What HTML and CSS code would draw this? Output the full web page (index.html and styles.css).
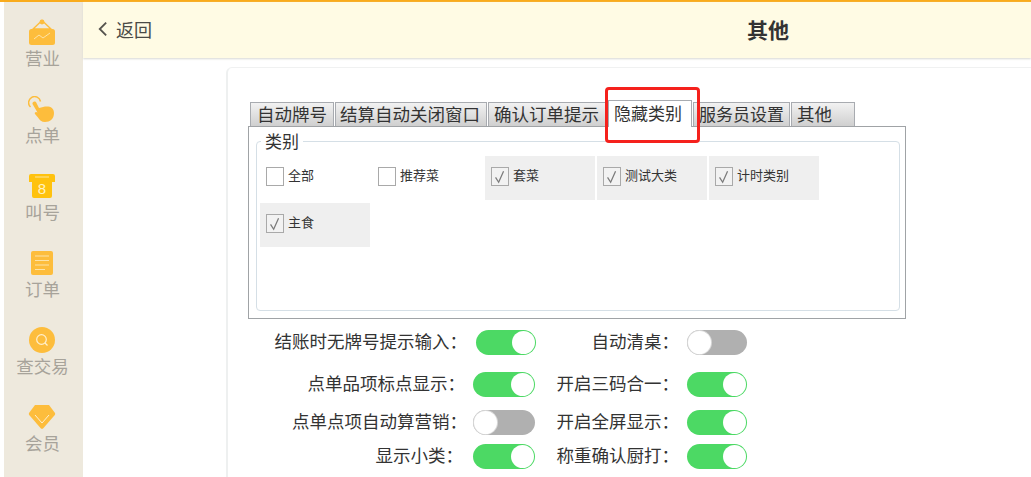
FILE: index.html
```html
<!DOCTYPE html>
<html lang="zh">
<head>
<meta charset="utf-8">
<title>其他</title>
<link rel="stylesheet" href="styles.css">
</head>
<body>
<div class="page">
  <nav class="side">
    <a class="nav-item">
      <svg class="nav-icon" viewBox="0 0 28 26"><path d="M14 1.500 5 10h18Z" fill="none" stroke="#fdbd3c" stroke-width="1.400"/><circle cx="14" cy="3" r="2.400" fill="#fdbd3c"/><rect x="1" y="10" width="26" height="16" rx="2.500" fill="#fdbd3c"/><path d="M6 20l5-4 4 3 7-5" fill="none" stroke="#fde3a8" stroke-width="1"/></svg>
      <span>营业</span>
    </a>
    <a class="nav-item">
      <svg class="nav-icon" viewBox="0 0 28 26"><path d="M2.500 11A6 6 0 1 1 12.500 5.500" fill="none" stroke="#fdbd3c" stroke-width="1.500"/><path d="M4.500 8c-.5-2.500 3-3.500 4-1l2.500 5 6-1.500c5-.5 9 1 9 6.500 0 6-4 9-9 9-3.500 0-5.500-2-7-4.500L7 18c-1-1.500 1-3 2.500-1.500Z" fill="#fdbd3c"/></svg>
      <span>点单</span>
    </a>
    <a class="nav-item">
      <svg class="nav-icon" viewBox="0 0 28 26"><path d="M3 1h22a2 2 0 0 1 2 2v6h-3v14a2 2 0 0 1-2 2H6a2 2 0 0 1-2-2V9H1V3a2 2 0 0 1 2-2Z" fill="#ffc20e"/><path d="M7 4h14" stroke="#fde59a" stroke-width="1"/><text x="14" y="21" class="icon-digit">8</text></svg>
      <span>叫号</span>
    </a>
    <a class="nav-item">
      <svg class="nav-icon" viewBox="0 0 28 26"><rect x="3" y="1" width="22" height="24" rx="2" fill="#fdbd3c"/><path d="M7 6h14M7 10.500h14M7 15h14M7 19.500h10" stroke="#fde3a8" stroke-width="1.200"/></svg>
      <span>订单</span>
    </a>
    <a class="nav-item">
      <svg class="nav-icon" viewBox="0 0 28 26"><circle cx="14" cy="13" r="13" fill="#fdbd3c"/><circle cx="13.500" cy="12.500" r="4.800" fill="none" stroke="#fff0cf" stroke-width="1.200"/><path d="m17 16 2.500 2.500" stroke="#fff0cf" stroke-width="1.200"/></svg>
      <span>查交易</span>
    </a>
    <a class="nav-item">
      <svg class="nav-icon" viewBox="0 0 28 26"><path d="M7 1h14l6 8a2 2 0 0 1-.2 2L15.500 24a2 2 0 0 1-3 0L1.200 11a2 2 0 0 1-.2-2Z" fill="#fdbd3c"/><path d="m7 11 7 8 7-8" fill="none" stroke="#fff0cf" stroke-width="1"/></svg>
      <span>会员</span>
    </a>
  </nav>

  <div class="main">
    <header class="topbar">
      <a class="back">
        <svg class="back-icon" viewBox="0 0 12 18"><path d="M10 2 3 9l7 7" fill="none" stroke="#55534e" stroke-width="2"/></svg>
        <span>返回</span>
      </a>
      <h1 class="title">其他</h1>
    </header>

    <section class="card">
      <div class="tabs">
        <div class="tab tab-auto">自动牌号</div>
        <div class="tab tab-close">结算自动关闭窗口</div>
        <div class="tab tab-confirm">确认订单提示</div>
        <div class="tab tab-hide">隐藏类别</div>
        <div class="tab tab-staff">服务员设置</div>
        <div class="tab tab-other">其他</div>
        <div class="highlight"></div>
      </div>
      <div class="tab-panel">
        <fieldset class="group">
          <legend>类别</legend>
          <div class="cat-grid">
            <label class="cat"><span class="box"></span><span class="cat-text">全部</span></label>
            <label class="cat"><span class="box"></span><span class="cat-text">推荐菜</span></label>
            <label class="cat is-on"><span class="box"><svg class="tick" viewBox="0 0 18 19"><path d="M4 10.500 7.500 16 13 3.500"/></svg></span><span class="cat-text">套菜</span></label>
            <label class="cat is-on"><span class="box"><svg class="tick" viewBox="0 0 18 19"><path d="M4 10.500 7.500 16 13 3.500"/></svg></span><span class="cat-text">测试大类</span></label>
            <label class="cat is-on"><span class="box"><svg class="tick" viewBox="0 0 18 19"><path d="M4 10.500 7.500 16 13 3.500"/></svg></span><span class="cat-text">计时类别</span></label>
            <label class="cat is-on"><span class="box"><svg class="tick" viewBox="0 0 18 19"><path d="M4 10.500 7.500 16 13 3.500"/></svg></span><span class="cat-text">主食</span></label>
          </div>
        </fieldset>
      </div>

      <div class="settings">
        <div class="lbl">结账时无牌号提示输入：</div><div class="tog on shift"></div>
        <div class="lbl lbl-r">自动清桌：</div><div class="tog off narrow"></div>
        <div class="lbl lbl-mid">点单品项标点显示：</div><div class="tog on"></div>
        <div class="lbl lbl-r">开启三码合一：</div><div class="tog on narrow"></div>
        <div class="lbl">点单点项自动算营销：</div><div class="tog off"></div>
        <div class="lbl lbl-r">开启全屏显示：</div><div class="tog on narrow"></div>
        <div class="lbl lbl-far">显示小类：</div><div class="tog on"></div>
        <div class="lbl lbl-r">称重确认厨打：</div><div class="tog on narrow"></div>
      </div>
    </section>
  </div>
</div>
</body>
</html>
```

FILE: styles.css
```css
* { box-sizing: border-box; }
html, body { margin: 0; height: 477px; overflow: hidden; background: #fff; }
body { font-family: "Noto Sans CJK SC", "Liberation Sans", sans-serif; color: #333; }

.page { display: flex; height: 477px; padding-left: 4px; border-top: 2px solid #f9ab1c; }
.side { width: 79px; flex: none; background: #eee9dd; padding-top: 17px; display: flex; flex-direction: column; }
.nav-item { height: 77px; flex: none; display: flex; flex-direction: column; align-items: center; padding-right: 2px; color: #a7a39a; font-size: 17.500px; line-height: 20px; }
.nav-icon { width: 28px; height: 26px; margin: 0 2px 3px 0; }
.icon-digit { font: 15px "Liberation Sans", sans-serif; fill: #fff3c4; text-anchor: middle; }

.main { flex: 1; min-width: 0; }
.topbar { height: 56px; background: #fffbe4; box-shadow: 0 1px 2px #d8d8d4; display: flex; align-items: center; position: relative; padding: 0 0 3px 14px; }
.back { display: flex; align-items: center; gap: 8px; font-size: 18px; color: #4a4a46; }
.back-icon { width: 11px; height: 18px; }
.title { position: absolute; left: 664px; top: 12px; margin: 0; font-size: 21px; line-height: 30px; font-weight: 700; color: #333; }

.card { margin: 9px 0 0 143px; height: 410px; border-left: 2px solid #eef0f0; border-top: 1px solid #f0f1f1; border-top-left-radius: 6px; padding: 31px 0 0 20px; }

.tabs { display: flex; align-items: flex-end; height: 27px; position: relative; padding-left: 2px; }
.tab { height: 24px; flex: none; border: 1px solid #a8abb0; border-bottom: 0; margin-right: 1px; padding-left: 5px; background: linear-gradient(#f2f2f2, #cfcfcf); font-size: 17.500px; line-height: 22px; white-space: nowrap; overflow: hidden; color: #333; }
.tab-auto { width: 84px; padding-left: 6px; }
.tab-close { width: 152px; padding-left: 4px; }
.tab-confirm { width: 119px; }
.tab-hide { width: 84px; height: 27px; background: #fff; font-size: 17px; line-height: 24px; margin-bottom: -1px; position: relative; z-index: 1; }
.tab-staff { width: 97px; padding-left: 5px; font-size: 17px; }
.tab-other { width: 64px; padding-left: 5px; }
.highlight { position: absolute; left: 357px; top: -12px; width: 95px; height: 56px; border: 3px solid #f5211c; border-radius: 4px; z-index: 2; }

.tab-panel { width: 658px; height: 193px; border: 1px solid #a0a3a6; padding: 6px 5px 7px 7px; }
.group { margin: 0; height: 178px; padding: 0 0 0 4px; border: 1px solid #d5dfe6; border-radius: 4px; }
.group legend { margin-left: 0; padding: 0 4px; font-size: 17px; line-height: 16px; color: #333; }
.cat-grid { display: grid; grid-template-columns: 110px 111px 110px 110px 110px; grid-auto-rows: 44px; column-gap: 2px; row-gap: 3px; margin: 7px 0 0 -1px; }
.cat { display: flex; align-items: center; padding: 0 0 4px 6px; gap: 4px; font-size: 13px; color: #333; }
.cat-text { padding-bottom: 3px; }
.cat.is-on { background: #efefef; }
.box { width: 18px; height: 19px; flex: none; border: 1px solid #a9a9a9; background: #fff; }
.cat.is-on .box { background: #f2f2f2; }
.tick { display: block; width: 16px; height: 17px; fill: none; stroke: #7a7a7a; stroke-width: 1.400; }

.settings { display: grid; grid-template-columns: 225px 62px 152px 60px; grid-template-rows: 42px 38px 34px 25px; margin-top: 11px; }
.lbl { height: 25px; line-height: 22px; text-align: right; padding-right: 6px; white-space: nowrap; color: #333; font-size: 17.500px; }
.lbl-mid { padding-right: 8px; }
.lbl-far { padding-right: 10px; }
.lbl-r { padding-right: 8px; }
.tog { width: 62px; height: 25px; border-radius: 13px; position: relative; }
.tog::after { content: ""; position: absolute; top: 1px; width: 23px; height: 23px; border-radius: 50%; background: #fff; }
.on { background: #4cd964; }
.on::after { right: 1px; }
.off { background: #b0b0b0; }
.off::after { left: 1px; box-shadow: 0 0 0 1px #d8d8d8; }
.narrow { width: 60px; }
.shift { width: 60px; margin-left: 3px; }
```
